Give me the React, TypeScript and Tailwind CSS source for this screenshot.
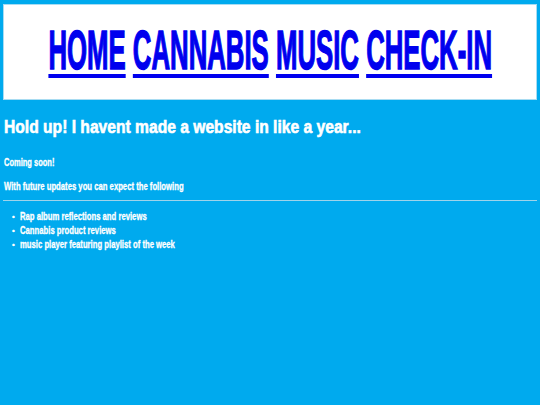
export default function App() {
  const links = ['HOME', 'CANNABIS', 'MUSIC', 'CHECK-IN'];
  const items = [
    'Rap album reflections and reviews',
    'Cannabis product reviews',
    'music player featuring playlist of the week',
  ];

  return (
    <div className="min-h-[405px] bg-[#00aaee] pt-1 px-[3px] font-['Liberation_Sans',Arial,sans-serif] font-bold text-white">
      {/* nav */}
      <div className="h-[96px] bg-white border border-[#a8dcf2] flex items-center justify-center">
        <div className="inline-block whitespace-nowrap scale-x-[0.46] origin-center text-[56px] leading-none pb-1 text-[#0000ee] [-webkit-text-stroke:1.5px_#0000ee]">
          {links.map((l, i) => (
            <span key={l}>
              <a href="#" className="underline decoration-[4px] underline-offset-[5px]">{l}</a>
              {i < links.length - 1 ? ' ' : ''}
            </span>
          ))}
        </div>
      </div>

      <div className="pl-px [-webkit-text-stroke:0.3px_white]">
        <h1 className="mt-[16px] text-[18px] leading-[22px] whitespace-nowrap [-webkit-text-stroke:0.6px_white]">
          <span className="inline-block scale-x-[0.868] origin-left">Hold up! I havent made a website in like a year...</span>
        </h1>
        <p className="mt-[19px] text-[10px] leading-[12px] whitespace-nowrap">
          <span className="inline-block scale-x-[0.75] origin-left">Coming soon!</span>
        </p>
        <p className="mt-[12px] text-[10px] leading-[12px] whitespace-nowrap">
          <span className="inline-block scale-x-[0.77] origin-left">With future updates you can expect the following</span>
        </p>
      </div>

      <hr className="mt-[7px] border-t border-[#9fd3ea]" />

      <ul className="mt-[9px] pl-[9px] text-[10px] leading-[14px] [-webkit-text-stroke:0.3px_white]">
        {items.map((t) => (
          <li key={t} className="flex items-center whitespace-nowrap">
            <span className="w-[8px] text-[8px]">•</span>
            <span className="inline-block scale-x-[0.77] origin-left">{t}</span>
          </li>
        ))}
      </ul>
    </div>
  );
}
